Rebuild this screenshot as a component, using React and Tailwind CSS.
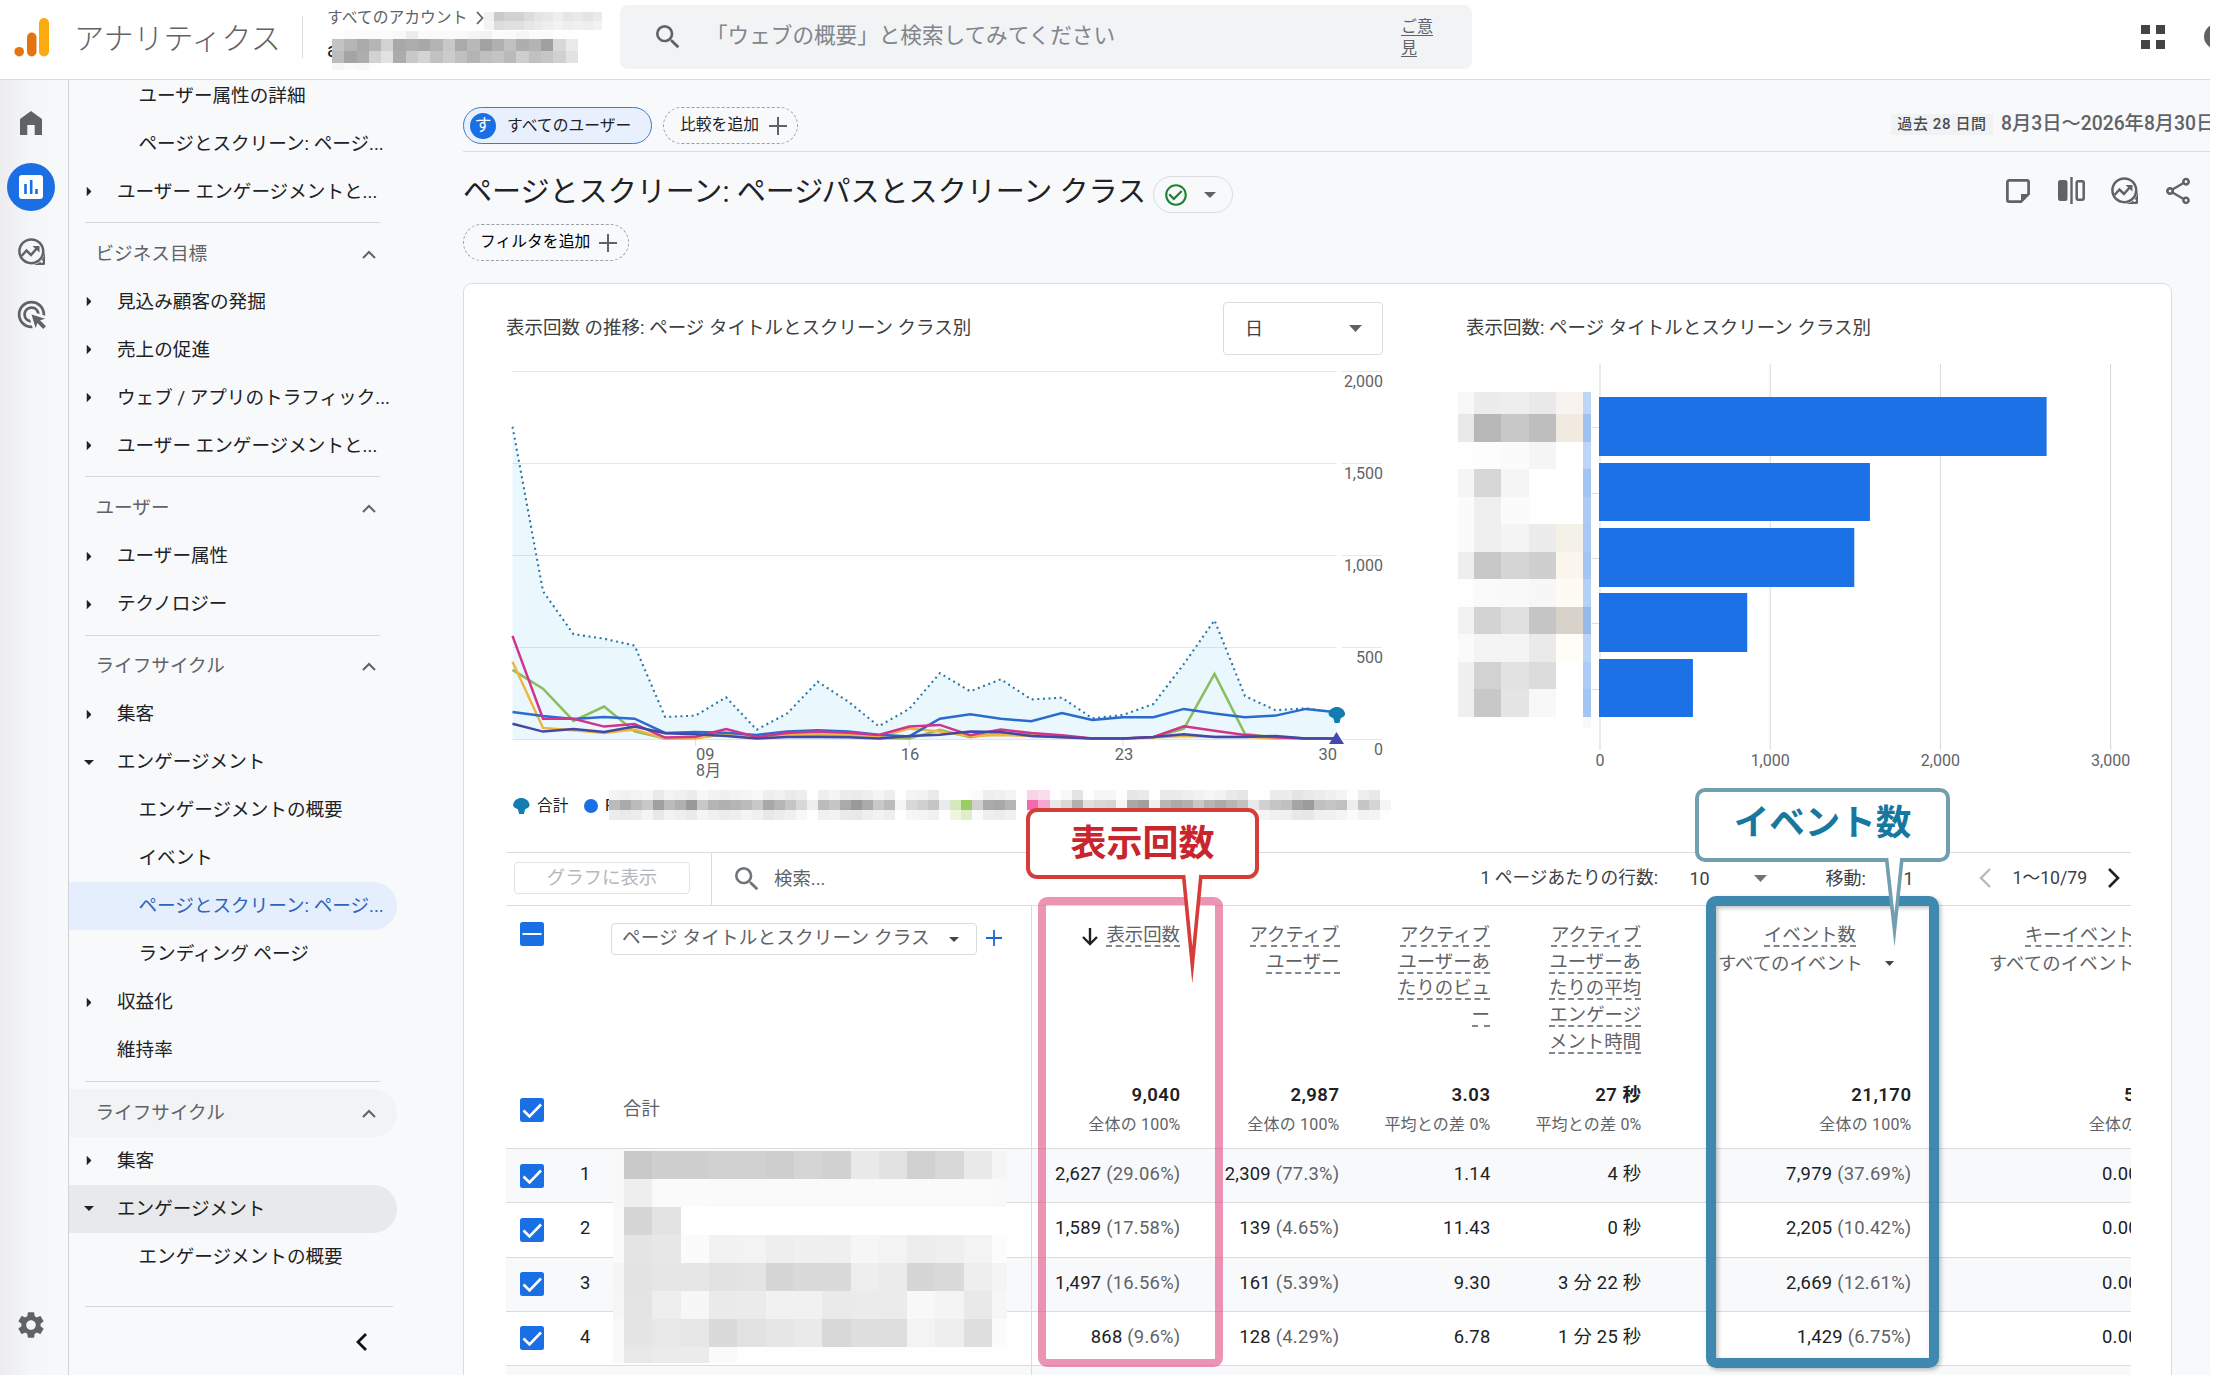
import {
  MdAdsClick,
  MdCheckCircleOutline,
  MdOutlineShare,
  MdSearch,
  MdSettings,
} from "react-icons/md";

const navItems = [
  { type: "child", label: "ユーザー属性の詳細" },
  { type: "child", label: "ページとスクリーン: ページ..." },
  { type: "group", label: "ユーザー エンゲージメントと..." },
  { type: "divider" },
  { type: "section", label: "ビジネス目標" },
  { type: "group", label: "見込み顧客の発掘" },
  { type: "group", label: "売上の促進" },
  { type: "group", label: "ウェブ / アプリのトラフィック..." },
  { type: "group", label: "ユーザー エンゲージメントと..." },
  { type: "divider" },
  { type: "section", label: "ユーザー" },
  { type: "group", label: "ユーザー属性" },
  { type: "group", label: "テクノロジー" },
  { type: "divider" },
  { type: "section", label: "ライフサイクル" },
  { type: "group", label: "集客" },
  { type: "group", label: "エンゲージメント", open: true },
  { type: "child", label: "エンゲージメントの概要" },
  { type: "child", label: "イベント" },
  { type: "child", label: "ページとスクリーン: ページ...", bg: "bg-[#e4eefd]", color: "text-[#2f66b8]" },
  { type: "child", label: "ランディング ページ" },
  { type: "group", label: "収益化" },
  { type: "leaf", label: "維持率" },
  { type: "divider" },
  { type: "section", label: "ライフサイクル", bg: "bg-[#f1f3f4]" },
  { type: "group", label: "集客" },
  { type: "group", label: "エンゲージメント", open: true, bg: "bg-[#e8e9eb]" },
  { type: "child", label: "エンゲージメントの概要" },
];

// daily values, 8/3 - 8/30
const series = {
  total: [1699, 805, 571, 547, 509, 121, 129, 228, 52, 141, 313, 205, 71, 165, 359, 261, 326, 217, 226, 114, 132, 192, 409, 647, 235, 158, 168, 147],
  green: [377, 275, 100, 178, 43, 4, 7, 29, 7, 18, 22, 18, 7, 4, 51, 11, 36, 24, 14, 4, 4, 9, 58, 355, 29, 11, 4, 4],
  yellow: [422, 62, 49, 34, 54, 4, 4, 33, 7, 24, 33, 29, 13, 58, 43, 18, 24, 18, 13, 4, 4, 9, 18, 14, 14, 4, 4, 4],
  blue: [149, 127, 111, 121, 112, 34, 40, 36, 24, 42, 49, 42, 25, 16, 112, 136, 112, 98, 143, 105, 120, 120, 165, 141, 120, 129, 165, 147],
  pink: [562, 112, 112, 69, 83, 9, 14, 56, 13, 34, 43, 36, 24, 69, 78, 22, 54, 34, 22, 4, 4, 13, 71, 47, 24, 11, 4, 4],
  navy: [85, 42, 56, 40, 69, 33, 27, 18, 4, 13, 13, 11, 4, 18, 25, 42, 40, 18, 11, 4, 4, 13, 27, 13, 13, 18, 5, 4],
};

const bars = [
  { y: 33, h: 59, value: 2627 },
  { y: 99, h: 58, value: 1589 },
  { y: 164, h: 59, value: 1497 },
  { y: 229, h: 59, value: 868 },
  { y: 295, h: 58, value: 549 },
];

const rows = [
  { n: 1, views: ["2,627", "(29.06%)"], users: ["2,309", "(77.3%)"], perUser: "1.14", time: "4 秒", events: ["7,979", "(37.69%)"] },
  { n: 2, views: ["1,589", "(17.58%)"], users: ["139", "(4.65%)"], perUser: "11.43", time: "0 秒", events: ["2,205", "(10.42%)"] },
  { n: 3, views: ["1,497", "(16.56%)"], users: ["161", "(5.39%)"], perUser: "9.30", time: "3 分 22 秒", events: ["2,669", "(12.61%)"] },
  { n: 4, views: ["868", "(9.6%)"], users: ["128", "(4.29%)"], perUser: "6.78", time: "1 分 25 秒", events: ["1,429", "(6.75%)"] },
];

// masked labels: one hex shade per cell
const accountMask = [
  "f1 ca d2 d2 dc e4 e8 ee e6 ea e4 ea",
  "f4 dc e0 e0 e6 ea ee f2 ee f0 ee f2",
];
const propertyMask = [
  "fe fb fb fb fb f8 ec fa fa fa fa f5 f2 fa fa f5 fa fa fe fe",
  "c4 b5 aa b5 d2 a8 ad a8 b4 c8 aa b8 a2 b0 c0 ae b4 a0 d8 ea",
  "bc a4 ad d2 e2 ac c8 d4 c2 cc c0 b4 c0 c4 ba ce c0 c6 d0 e2",
  "f6 fb f8 fe fe fe fe fe fe fe fe fe fe fe fe fe fe fe fe fe",
];
const legendMask = [
  "f4 f1 f4 f6 ea f3 f0 ec f7 f2 f0 f3 f5 f8 ee f1 ea ee fe ee f4 ec ea ee f5 ee fe f4 f2 ea fe fe fe fb ee f0 f4 fe #fbd3e8 #fbdcec fe f8 e4 fe f6 f7 fe e6 ea fe ea ea ee f2 f6 f2 ea e6 fe fe ec ec e4 e8 ec f0 f4 fe ee e8 fe",
  "bb aa bb c8 a0 bb b0 99 c8 b5 b0 b5 bb c8 a8 b5 c5 d8 ee bb c5 aa 99 aa c8 bb f5 d8 d0 c5 #eae8f0 #d5e8b8 #9ccc65 d0 aa a8 b5 ff #f06ab0 #f5a8d0 e8 d8 b0 e0 d8 d5 f5 a8 a0 f0 b5 aa b0 c8 b5 aa b5 c0 e8 d0 c5 c0 a5 9c c0 c5 c0 ee c5 d5 f5",
  "ec ea ec f4 e8 f2 ee ea f4 f0 ec ee f4 f0 e8 ec f0 f8 fe f0 f2 ea e8 ee f2 ee fe f6 f4 f0 fe #eef6e0 #ddeec8 fa ee ec f0 ff #fbdcec #fbe4f0 f8 f4 ea f8 f6 f6 fe ea e8 fc ee ea ec f2 ee ea f0 f0 fa f4 f0 f0 e8 e6 f0 f0 f4 fa f2 f4 fe",
];
const barMask = [
  "f8 ec ee e9 #f7f3f0 #bdd6f6",
  "e8 b8 c8 be #f0eae1 #9fc2f2",
  "fe fd fb f5 ff #bdd6f6",
  "f5 d7 f5 ff ff #a4c5f3",
  "fb ef fb fe ff #accaf4",
  "fb ef f4 ec #f4f1e8 #a9c8f4",
  "ee c8 d6 cf #fbf6ee #a4c5f3",
  "fe fa f9 f7 #fefbf5 #b5d0f5",
  "f2 d3 e0 c5 #d8d3ca #96b9e8",
  "fa f4 f4 ea #fefdf8 #bad4f6",
  "f0 d2 e2 dc ff #adcbf4",
  "ef c8 e5 f8 ff #a4c5f3",
  "ff ff ff ff ff #f8f9fd",
];
const rowMask = [
  "f8 c9 cf cf d1 d1 ce d5 d1 e9 e2 d1 d8 e9 f5",
  "f8 ee fa fb fa fa fa fa fa fa fa fa fa fa f9",
  "fa d6 e3 ff ff ff ff ff ff ff ff ff ff ff ff",
  "fa e5 e7 fb f2 f3 ee f0 ef f6 f3 ed ef f3 fc",
  "f5 e3 e6 e6 e2 e4 d6 da da ee eb d6 da ee f4",
  "f6 e4 ee f7 ea eb f1 f1 ea eb eb f8 f4 e9 f6",
  "f9 e5 e8 e7 da e2 e6 ea d8 de dd f3 ee de fb",
  "f9 e8 eb eb fa fe fe fe fe fe fe fe fe fe fe",
];

function Mosaic({ data, className, first, last, firstRow = "flex-1", lastRow = "flex-1" }) {
  return (
    <div className={`flex flex-col shrink-0 ${className}`}>
      {data.map((line, r) => (
        <div key={r} className={`flex ${r === 0 ? firstRow : r === data.length - 1 ? lastRow : "flex-1"}`}>
          {line.split(" ").map((c, i, all) => (
            <div
              key={i}
              className={i === 0 && first ? first : i === all.length - 1 && last ? last : "flex-1"}
              style={{ backgroundColor: c.startsWith("#") ? c : `#${c}${c}${c}` }}
            />
          ))}
        </div>
      ))}
    </div>
  );
}

function Caret({ className = "w-[13px] h-[7px] text-[#5f6368]" }) {
  return (
    <svg viewBox="0 0 12 6" preserveAspectRatio="none" className={className}>
      <path d="M0 0h12L6 6z" fill="currentColor" />
    </svg>
  );
}

function Plus({ className }) {
  return (
    <svg viewBox="0 0 18 18" className={className} stroke="currentColor" strokeWidth="2">
      <path d="M9 0v18M0 9h18" />
    </svg>
  );
}

function HomeIcon({ className }) {
  return (
    <svg viewBox="0 0 22 24" className={className} fill="currentColor">
      <path d="M0 8L11 0l11 8v16h-7.300V14H7.300v10H0z" />
    </svg>
  );
}

function ExploreIcon({ className }) {
  return (
    <svg viewBox="0 0 27 27" className={className} fill="none" stroke="currentColor" strokeWidth="2.500">
      <circle cx="13.300" cy="13.300" r="11.900" />
      <path d="M27 13v12.500a1.500 1.500 0 0 1-1.500 1.500H14c7-.5 12-5 13-14z" fill="currentColor" stroke="none" />
      <circle cx="23.600" cy="23.600" r="1.300" fill="white" stroke="none" />
      <path d="M3.500 18l5-5.500 4.500 4.500 6.500-7.500" />
      <path d="M14.500 8h7v6.500z" fill="currentColor" stroke="none" />
    </svg>
  );
}

function NoteIcon({ className }) {
  return (
    <svg viewBox="0 0 24 24" className={className} fill="none" stroke="currentColor" strokeWidth="2.700">
      <path d="M15 22.600H3a1.600 1.600 0 0 1-1.600-1.600V3A1.600 1.600 0 0 1 3 1.400h18A1.600 1.600 0 0 1 22.600 3v12z" />
      <path d="M15 23v-8h8z" fill="currentColor" stroke="none" />
    </svg>
  );
}

function CompareIcon({ className }) {
  return (
    <svg viewBox="0 0 27 27" className={className}>
      <rect x="0" y="3" width="9.500" height="21" rx="2.500" fill="currentColor" />
      <rect x="12.300" y="0" width="2.400" height="27" fill="currentColor" />
      <rect x="18.700" y="4.200" width="7" height="18.600" rx="1.500" fill="none" stroke="currentColor" strokeWidth="2.500" />
    </svg>
  );
}

function Checkbox({ mixed }) {
  return (
    <svg viewBox="0 0 24 24" className="w-6 h-6 shrink-0">
      <rect width="24" height="24" rx="2.500" fill="#1a6fe4" />
      <path d={mixed ? "M2.500 12h19" : "M3.500 12.500l6 6L21 6.500"} fill="none" stroke="white" strokeWidth={mixed ? 2 : 2.6} />
    </svg>
  );
}

function Header() {
  return (
    <header className="flex h-20 shrink-0 border-b border-[#dadce0] bg-white">
      <svg viewBox="0 0 40 42" className="ml-3 mt-4 w-10 h-[42px] shrink-0">
        <rect x="27" y="2" width="10" height="38.500" rx="5" fill="#f9ab10" />
        <rect x="15" y="16.500" width="9.500" height="24" rx="4.700" fill="#e37410" />
        <circle cx="7.200" cy="35.700" r="4.800" fill="#e37410" />
      </svg>
      <div className="ml-[22px] w-[228px] shrink-0 h-[77px] flex items-center text-[30px] font-light text-[#5f6368] whitespace-nowrap">アナリティクス</div>
      <div className="mt-4 h-[42px] w-px bg-[#dadce0]" />
      <div className="ml-6 w-[293px] shrink-0">
        <div className="flex items-center h-[36px] text-[15.800px] text-[#5f6368] whitespace-nowrap">
          すべてのアカウント
          <svg viewBox="0 0 8 14" className="ml-[9px] w-2 h-[14px] shrink-0" fill="none" stroke="#5f6368" strokeWidth="1.800">
            <path d="M1 1l5.500 6L1 13" />
          </svg>
          <Mosaic data={accountMask} className="mt-[6px] w-[118px] h-[18px]" />
        </div>
        <div className="flex items-center h-[34px] -mt-[3px] text-[20px] text-[#202124]">
          <span className="w-[5px]">a</span>
          <Mosaic data={propertyMask} firstRow="h-[8px]" lastRow="h-[7px]" className="w-[246px] h-[39px]" />
        </div>
      </div>
      <div className="mt-[5px] w-[852px] h-16 shrink-0 rounded-lg bg-[#f1f3f4] flex items-center">
        <MdSearch className="ml-[32px] w-[32px] h-[32px] text-[#5f6368]" />
        <span className="ml-[22px] mb-[1px] text-[21.600px] text-[#80868b] whitespace-nowrap">「ウェブの概要」と検索してみてください</span>
        <span className="ml-auto mr-[34px] w-[37px] text-[16px] leading-[21px] text-[#5f6368] underline underline-offset-[3px]">ご意見</span>
      </div>
      <div className="ml-auto mt-[25px] mr-[39px] grid h-6 w-[24px] shrink-0 grid-cols-2 gap-[6px]">
        <div className="bg-[#444]" />
        <div className="bg-[#444]" />
        <div className="bg-[#444]" />
        <div className="bg-[#444]" />
      </div>
      <div className="mt-[24px] -mr-[19px] w-[25px] h-[25px] shrink-0 rounded-full bg-[#5f6368]" />
    </header>
  );
}

function Rail() {
  return (
    <div className="w-[69px] shrink-0 border-r border-[#d0d2d6] bg-linear-to-r from-[#ededef] via-[#f5f6f8] to-[#f8f9fb] flex flex-col text-[#5f6368]">
      <HomeIcon className="ml-[20px] mt-[31px] w-[22px] h-6" />
      <div className="ml-[7px] mt-[28px] w-12 h-12 rounded-full bg-[#1a6fe4] flex items-center justify-center">
        <svg viewBox="0 0 24 24" className="w-6 h-6">
          <rect width="24" height="24" rx="3" fill="white" />
          <path d="M6.500 9v10M12.200 5v14M17.500 14v5" stroke="#1a6fe4" strokeWidth="2.600" />
        </svg>
      </div>
      <ExploreIcon className="ml-[18px] mt-[26.500px] w-[27px] h-[27px]" />
      <MdAdsClick className="ml-[15px] mt-[33px] w-[33px] h-[33px]" />
      <MdSettings className="ml-[15px] mt-auto mb-[34px] w-8 h-8" />
    </div>
  );
}

function NavItem({ item }) {
  if (item.type === "divider") {
    return (
      <div className="h-[14.300px] flex items-center shrink-0">
        <div className="ml-4 w-[295px] h-px bg-[#d5d7db]" />
      </div>
    );
  }
  const bg = item.bg || "";
  if (item.type === "section") {
    return (
      <div className={`flex items-center justify-between h-12 shrink-0 w-[328px] pl-[26.500px] pr-[21px] rounded-r-full text-[#5f6368] ${bg}`}>
        {item.label}
        <svg viewBox="0 0 14 9" className="w-[14px] h-[9px] mt-[1px]" fill="none" stroke="#5f6368" strokeWidth="2">
          <path d="M1 8l6-6 6 6" />
        </svg>
      </div>
    );
  }
  if (item.type === "child") {
    return (
      <div className={`flex items-center h-12 shrink-0 w-[328px] pl-[69.500px] rounded-r-full whitespace-nowrap ${bg} ${item.color || ""}`}>
        {item.label}
      </div>
    );
  }
  return (
    <div className={`flex items-center h-12 shrink-0 w-[328px] pl-[15px] rounded-r-full whitespace-nowrap ${bg}`}>
      <div className="w-[33px] flex">
        {item.type === "group" && (
          <Caret className={item.open ? "w-[10px] h-[5px]" : "w-[10px] h-[5px] -rotate-90"} />
        )}
      </div>
      {item.label}
    </div>
  );
}

function Sidebar() {
  return (
    <nav className="w-[394px] shrink-0 text-[18.600px] leading-6 text-[#202124] flex flex-col overflow-hidden">
      <div className="-mt-[8.500px] flex flex-col">
        {navItems.map((item, i) => (
          <NavItem key={i} item={item} />
        ))}
      </div>
      <div className="ml-4 mt-[25px] w-[308px] h-px shrink-0 bg-[#d5d7db]" />
      <svg viewBox="0 0 11 18" className="ml-[287px] mt-[26px] w-[11px] h-[18px] shrink-0" fill="none" stroke="#111" strokeWidth="2.800">
        <path d="M10 1L2 9l8 8" />
      </svg>
    </nav>
  );
}

const px = (i) => 6.5 + i * 30.52;
const py = (v) => 384.3 - (v / 2000) * 368;
const toPath = (values) => values.map((v, i) => `${i ? "L" : "M"}${px(i).toFixed(1)} ${py(v).toFixed(1)}`).join("");

function LineChart() {
  const ticks = [2000, 1500, 1000, 500, 0];
  return (
    <svg viewBox="0 0 890 430" className="w-[890px] h-[430px] shrink-0 block">
      {ticks.map((t) => (
        <g key={t}>
          <path d={`M6.500 ${Math.round(py(t)) + 0.5}H830.500M836 ${Math.round(py(t)) + 0.5}H876`} stroke="#e6e7e9" />
          <text x="877" y={py(t) + 16} textAnchor="end" fontSize="16" fill="#5f6368">
            {t.toLocaleString("en-US")}
          </text>
        </g>
      ))}
      {[6, 13, 20].map((d) => (
        <path key={d} d={`M${px(d)} 385v6`} stroke="#dadce0" />
      ))}
      <path d={`${toPath(series.total)}V384.300H6.500Z`} fill="#12a4e8" fillOpacity="0.09" />
      <g fill="none" strokeWidth="2.500">
        <path d={toPath(series.total)} stroke="#2878a8" strokeDasharray="2 3.600" strokeWidth="2.100" />
        <path d={toPath(series.green)} stroke="#8bbd5c" />
        <path d={toPath(series.yellow)} stroke="#f0b440" />
        <path d={toPath(series.blue)} stroke="#2a6bcb" />
        <path d={toPath(series.pink)} stroke="#d0348c" />
        <path d={toPath(series.navy)} stroke="#4248a4" />
      </g>
      <g transform="translate(822.500 352)">
        <Fan />
      </g>
      <path d="M830.500 377l7.500 12h-15z" fill="#4248b0" />
      <g fontSize="16.500" fill="#5f6368">
        <text x="190" y="404.500">09</text>
        <text x="190" y="420.500" fontSize="16">8月</text>
        <text x="404" y="404.500" textAnchor="middle">16</text>
        <text x="618" y="404.500" textAnchor="middle">23</text>
        <text x="831" y="404.500" textAnchor="end">30</text>
      </g>
    </svg>
  );
}

function Fan() {
  return <path d="M0 7C1 2 4.500 0 8.300 0s7.400 2 8.400 7c-.4 2-1.800 3.300-4.200 4-.8.800-1 3.500-1.600 5H6.200C5.600 14.500 5.400 11.800 4.500 11 2 10.300.4 9 0 7z" fill="#127db3" />;
}

function BarChart() {
  const x = (v) => 142 + v * 0.1702;
  return (
    <div className="relative">
      <svg viewBox="0 0 700 420" className="w-[700px] h-[420px] block">
        {[0, 1000, 2000, 3000].map((t) => (
          <g key={t}>
            <path d={`M${x(t)} 0V386`} stroke="#d5d7da" />
            <text x={x(t)} y="401.500" textAnchor="middle" fontSize="16" fill="#5f6368">
              {t.toLocaleString("en-US")}
            </text>
          </g>
        ))}
        {bars.map((b) => (
          <g key={b.value}>
            <path d={`M134 ${b.y + 30.5}h8`} stroke="#dadce0" />
            <rect x="141" y={b.y} width={x(b.value) - 141.5} height={b.h} fill="#1c71e6" />
          </g>
        ))}
      </svg>
      {/* masked page names */}
      <Mosaic data={barMask} first="w-4" last="w-[8px]" firstRow="h-[22px]" lastRow="h-[11px]" className="absolute left-0 top-[28px] w-[133px] h-[336px]" />
    </div>
  );
}

function Charts() {
  return (
    <div className="flex h-[567.500px] shrink-0">
      <div className="w-[960px] pl-[42px] pt-[18px] flex flex-col">
        <div className="flex items-center justify-between h-[53px] w-[877px]">
          <h2 className="text-[18.500px] text-[#3c4043] whitespace-nowrap">表示回数 の推移: ページ タイトルとスクリーン クラス別</h2>
          <div className="flex items-center justify-between w-40 h-[53px] pl-[21px] pr-[20px] rounded border border-[#dadce0] text-[18px] text-[#3c4043]">
            日
            <Caret />
          </div>
        </div>
        <LineChart />
        <div className="flex items-center h-[40px] mt-px pl-[7px] text-[16px] text-[#202124]">
          <svg viewBox="0 0 17 16" className="w-[17px] h-4">
            <Fan />
          </svg>
          <span className="ml-[7px] text-[15.700px]">合計</span>
          <span className="ml-[16px] w-[13.500px] h-[13.500px] rounded-full bg-[#1a6fe4]" />
          <span className="ml-[7px] w-[4px]">F</span>
          <Mosaic data={legendMask} className="w-[782px] h-[31px] -mt-[2px]" />
        </div>
      </div>
      <div className="pl-[34px] pt-[18px]">
        <h2 className="flex items-center h-[53px] pl-[8px] text-[18.500px] text-[#3c4043] whitespace-nowrap">表示回数: ページ タイトルとスクリーン クラス別</h2>
        <div className="mt-[9px]">
          <BarChart />
        </div>
      </div>
    </div>
  );
}

function Toolbar() {
  return (
    <div className="flex items-center h-[54.500px] w-[1624.500px] ml-[42px] shrink-0 border-y border-[#dadce0] text-[18.400px] text-[#3c4043] whitespace-nowrap">
      <div className="ml-2 -mt-px flex items-center justify-center w-[176px] h-8 rounded border border-[#e0e2e5] text-[#b4b7bb]">グラフに表示</div>
      <div className="ml-[21px] h-full w-px bg-[#dadce0]" />
      <MdSearch className="ml-[19px] w-8 h-8 text-[#70757a]" />
      <span className="ml-[11px] text-[#5f6368]">検索...</span>
      <div className="ml-auto flex items-center text-[18px] -mt-px">
        <span className="w-[209px] text-[17.700px]">1 ページあたりの行数:</span>
        <span className="w-[64px]">10</span>
        <Caret className="w-[13px] h-[7px] text-[#70757a]" />
        <span className="ml-[59px] w-[78px]">移動:</span>
        <span className="w-[75px]">1</span>
        <svg viewBox="0 0 12 20" className="w-3 h-5" fill="none" stroke="#b8babd" strokeWidth="2.400">
          <path d="M11 1L2 10l9 9" />
        </svg>
        <span className="ml-[22px] w-[95px] text-[17.700px]">1〜10/79</span>
        <svg viewBox="0 0 12 20" className="w-3 h-5 mr-[11px]" fill="none" stroke="#202124" strokeWidth="2.600">
          <path d="M1 1l9 9-9 9" />
        </svg>
      </div>
    </div>
  );
}

function HeadLines({ lines }) {
  return lines.map((l) => (
    <div key={l} className="flex justify-end h-[26.700px]">
      <span className="h-[24px] leading-[24px] border-b-2 border-dashed border-[#80868b]">{l}</span>
    </div>
  ));
}

function Total({ value, note }) {
  return (
    <div className="pr-[15.500px] text-right">
      <div className="h-[29px] leading-[29px] text-[18.500px] font-semibold tracking-[0.500px] text-[#202124]">{value}</div>
      <div className="h-[29px] leading-[29px] text-[16px] tracking-[0.200px] text-[#5f6368]">{note}</div>
    </div>
  );
}

function Pair({ cell }) {
  return (
    <div className="pr-[15.500px] text-right">
      {cell[0]} <span className="text-[#5f6368]">{cell[1]}</span>
    </div>
  );
}

const cols = "grid grid-cols-[105px_420px_165px_159px_151px_151px_270px_280px] w-[1701px]";

function Table() {
  return (
    <div className="relative ml-[42px] w-[1624.500px] flex-1 overflow-hidden whitespace-nowrap text-[18.400px] text-[#202124]">
      <div className={`${cols} h-[167px] pt-[17px] text-[#5f6368]`}>
        <div className="pl-[14px] -mt-px">
          <Checkbox mixed />
        </div>
        <div className="flex items-start">
          <div className="flex items-center w-[366px] h-8 pl-[10px] rounded border border-[#dadce0]">
            <span className="text-[18.600px] tracking-[0.150px]">ページ タイトルとスクリーン クラス</span>
            <Caret className="ml-auto mr-[17px] w-[10px] h-[5px] text-[#444]" />
          </div>
          <Plus className="ml-[9px] mt-[7px] w-4 h-4 text-[#1967d2]" />
        </div>
        <div className="pr-4 flex justify-end items-start">
          <svg viewBox="0 0 16 18" className="mt-[5px] mr-[8px] w-4 h-[18px]" fill="none" stroke="#202124" strokeWidth="2.400">
            <path d="M8 0v16M1 9l7 7 7-7" />
          </svg>
          <div>
            <HeadLines lines={["表示回数"]} />
          </div>
        </div>
        <div className="pr-[15.500px]"><HeadLines lines={["アクティブ", "ユーザー"]} /></div>
        <div className="pr-4"><HeadLines lines={["アクティブ", "ユーザーあ", "たりのビュ", "ー"]} /></div>
        <div className="pr-4"><HeadLines lines={["アクティブ", "ユーザーあ", "たりの平均", "エンゲージ", "メント時間"]} /></div>
        <div className="pr-[33px]">
          <div className="pr-[38px]"><HeadLines lines={["イベント数"]} /></div>
          <div className="flex items-center justify-end h-[28px]">
            すべてのイベント
            <Caret className="ml-[22px] w-[9px] h-[5px] text-[#444]" />
          </div>
        </div>
        <div className="w-[208px]">
          <HeadLines lines={["キーイベント"]} />
          <div className="flex items-center justify-end h-[28px] w-[208px] tracking-[0.150px]">すべてのイベント</div>
        </div>
      </div>
      <div className={`${cols} h-[75px] pt-[8px]`}>
        <div className="pl-[14px] pt-[17px]">
          <Checkbox />
        </div>
        <div className="pl-[12px] pt-[14px] text-[#5f6368]">合計</div>
        <Total value="9,040" note="全体の 100%" />
        <Total value="2,987" note="全体の 100%" />
        <Total value="3.03" note="平均との差 0%" />
        <Total value="27 秒" note="平均との差 0%" />
        <Total value="21,170" note="全体の 100%" />
        <div className="pl-[162px]">
          <div className="pl-[35px] h-[29px] leading-[29px] text-[18.500px] font-semibold">5</div>
          <div className="h-[29px] leading-[29px] text-[16px] text-[#5f6368]">全体の</div>
        </div>
      </div>
      {rows.map((r) => (
        <div key={r.n} className={`${cols} h-[54.300px] border-t border-[#dadce0] tracking-[0.250px] leading-[50px] odd:bg-[#f8f9fb] bg-white`}>
          <div className="pl-[14px] h-[53px] flex items-center">
            <Checkbox />
            <span className="ml-[36px] -mt-[3px]">{r.n}</span>
          </div>
          <div />
          <Pair cell={r.views} />
          <Pair cell={r.users} />
          <div className="pr-[15.500px] text-right">{r.perUser}</div>
          <div className="pr-[15.500px] text-right">{r.time}</div>
          <Pair cell={r.events} />
          <div className="pl-[175px]">0.00</div>
        </div>
      ))}
      <div className="h-5 border-t border-[#dadce0] bg-[#f8f9fb]" />
      <div className="absolute left-[525px] top-0 w-px h-full bg-[#dadce0]" />
      {/* masked page titles */}
      <Mosaic data={rowMask} first="w-[11px]" last="w-[15px]" lastRow="h-[16px]" className="absolute left-[107px] top-[245px] w-[394px] h-[212px]" />
    </div>
  );
}

function Callouts() {
  return (
    <>
      <div className="absolute left-[1038px] top-[897px] w-[185px] h-[470px] rounded-[9px] border-8 border-[#df4c82]/60" />
      <div className="absolute left-[1706px] top-[896px] w-[233px] h-[472px] rounded-[10px] border-10 border-[#2479a6]/88 shadow-[2px_2px_4px_rgba(0,0,0,0.25),inset_2px_2px_4px_rgba(0,0,0,0.25)]" />
      <div className="absolute left-[1026px] top-[808px] w-[233px] h-[71px] rounded-[11px] border-4 border-[#d63c38] bg-white flex items-center justify-center text-[36px] font-bold text-[#c9252d]">
        表示回数
      </div>
      <svg viewBox="0 0 30 114" className="absolute left-[1177px] top-[874px] w-[30px] h-[114px]">
        <path d="M6.500 1L15.300 91 24 1" fill="white" stroke="#d63c38" strokeWidth="3.600" strokeMiterlimit="30" />
      </svg>
      <div className="absolute left-[1695px] top-[788px] w-[255px] h-[74px] rounded-[10px] border-4 border-[#729fb0] bg-white flex items-center justify-center pb-[3px] text-[35.500px] font-bold text-[#16789f]">
        イベント数
      </div>
      <svg viewBox="0 0 30 94" className="absolute left-[1879px] top-[857px] w-[30px] h-[94px]">
        <path d="M7.500 1L15.500 73 23 1" fill="white" stroke="#729fb0" strokeWidth="3.600" strokeMiterlimit="30" />
      </svg>
    </>
  );
}

export default function App() {
  return (
    <div className="relative w-[2214px] h-[1380px] overflow-hidden bg-white font-[Roboto,'Noto_Sans_CJK_JP',sans-serif]">
      <div className="flex flex-col w-[2210px] h-[1375px] overflow-hidden bg-[#f8f9fb]">
        <Header />
        <div className="flex flex-1 min-h-0">
          <Rail />
          <Sidebar />
          <main className="flex-1 min-w-0 flex flex-col overflow-hidden">
            <div className="flex h-[72px] shrink-0 pt-[27px] border-b border-[#dadce0] text-[15.800px] text-[#202124] whitespace-nowrap">
              <div className="flex items-center w-[189px] h-[37px] pl-[6px] rounded-full border border-[#3d7cc9] bg-[#e8f0fe]">
                <span className="flex items-center justify-center w-[26px] h-[26px] rounded-full bg-[#1a6fe4] text-white text-[17px]">す</span>
                <span className="ml-[11px]">すべてのユーザー</span>
              </div>
              <div className="ml-[11px] flex items-center w-[135px] h-[37px] pl-4 rounded-full border border-dashed border-[#9aa0a6]">
                <span className="-mt-px">比較を追加</span>
                <Plus className="ml-[10px] w-[18px] h-[18px] text-[#5f6368]" />
              </div>
              <div className="ml-auto flex items-center w-[319px] h-[34px] font-medium text-[#4a4d51]">
                <span className="w-[102px] h-[21px] leading-[21px] shrink-0 text-center bg-[#f1f2f4] text-[15px] tracking-[0.600px]">過去 28 日間</span>
                <span className="ml-[8px] text-[19.300px] text-[#5f6368]">8月3日〜2026年8月30日</span>
              </div>
            </div>
            <div className="flex items-center h-[37px] mt-6 shrink-0">
              <h1 className="text-[29.050px] text-[#202124] whitespace-nowrap -mt-[3px]">ページとスクリーン: ページパスとスクリーン クラス</h1>
              <div className="ml-[7px] flex items-center shrink-0 w-20 h-[37px] pl-[9px] rounded-full border border-[#dadce0]">
                <MdCheckCircleOutline className="w-[26px] h-[26px] text-[#1e8035]" />
                <Caret className="ml-[15px] w-[12px] h-[6px] text-[#5f6368]" />
              </div>
              <div className="ml-auto mr-4 flex items-center gap-[21.500px] text-[#5f6368] mb-[8px]">
                <NoteIcon className="w-6 h-6 mx-1" />
                <CompareIcon className="w-[27px] h-[27px] mx-[2.500px]" />
                <ExploreIcon className="w-[27px] h-[27px] mx-[2.500px]" />
                <MdOutlineShare className="w-8 h-8" />
              </div>
            </div>
            <div className="mt-[11px] flex items-center shrink-0 w-[166px] h-[37px] pl-[16px] rounded-full border border-dashed border-[#9aa0a6] text-[15.800px] whitespace-nowrap">
              <span className="-mt-[2px]">フィルタを追加</span>
              <Plus className="ml-[9px] w-[18px] h-[18px] text-[#5f6368]" />
            </div>
            <div className="mt-[22px] w-[1709px] flex-1 min-h-0 flex flex-col overflow-hidden rounded-t-[9px] border border-b-0 border-[#dadce0] bg-white">
              <Charts />
              <Toolbar />
              <Table />
            </div>
          </main>
        </div>
      </div>
      <Callouts />
    </div>
  );
}
